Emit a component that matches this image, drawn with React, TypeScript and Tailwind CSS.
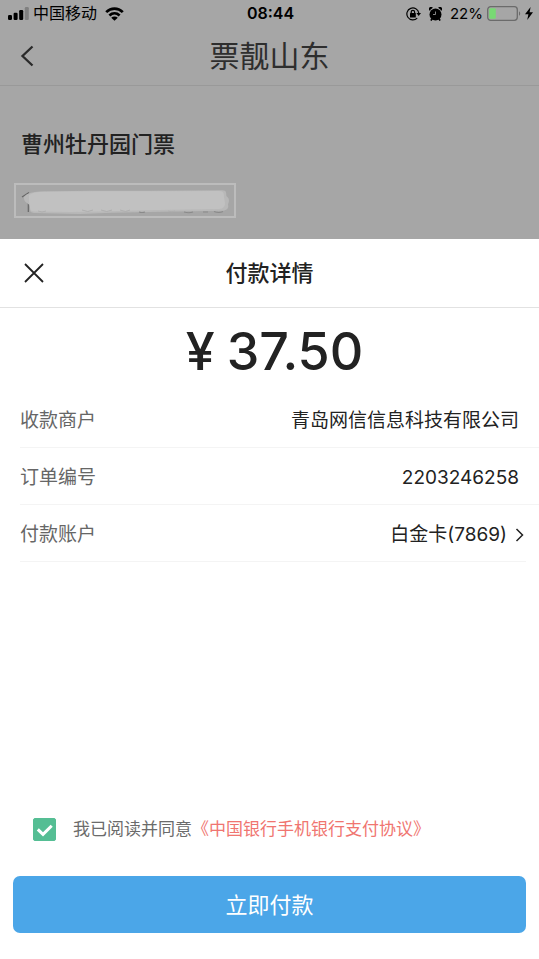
import { useState } from 'react';

const rows = [
  { label: '收款商户', value: '青岛网信信息科技有限公司' },
  { label: '订单编号', value: '2203246258' },
];

function StatusBar() {
  return (
    <div className="grid h-[27px] grid-cols-[1fr_auto_1fr] items-center pl-2 pr-1.5 text-base leading-[27px] text-black">
      <div className="flex items-center">
        <svg width="21" height="13" viewBox="0 0 21 13" aria-hidden="true">
          <rect x="0" y="8" width="4" height="5" rx="1.2" />
          <rect x="5.6" y="5.8" width="4" height="7.2" rx="1.2" />
          <rect x="11.2" y="3" width="4" height="10" rx="1.2" />
          <rect x="16.8" y="0" width="4" height="13" rx="1.2" fill="#808080" />
        </svg>
        <span className="ml-1">中国移动</span>
        <svg className="ml-2" width="19" height="14" viewBox="0 0 19 14" aria-hidden="true">
          <path d="M1.2 5.1C6 .4 13 .4 17.8 5.1" fill="none" stroke="#000" strokeWidth="2.7" />
          <path d="M4.4 8.5c3-2.8 7.2-2.8 10.2 0" fill="none" stroke="#000" strokeWidth="2.7" />
          <path d="M9.5 13.8 6.2 10.7c1.9-1.6 4.7-1.6 6.6 0z" />
        </svg>
      </div>
      <span className="font-semibold">08:44</span>
      <div className="flex items-center justify-end">
        {/* Rotation lock */}
        <svg width="15" height="14" viewBox="0 0 15 14" fill="none" stroke="#000" aria-hidden="true">
          <path d="M11.2 11.1A6 6 0 1 1 12.8 6" strokeWidth="1.2" />
          <path d="M10.4 6h4.6l-2.3 3z" fill="#000" stroke="none" />
          <rect x="4" y="6" width="5.8" height="4.4" rx=".5" fill="#000" stroke="none" />
          <path d="M5.2 6.4V5a1.7 1.7 0 0 1 3.4 0v1.4" strokeWidth="1.2" />
        </svg>
        {/* Alarm */}
        <svg className="ml-2" width="13" height="14" viewBox="0 0 13 14" aria-hidden="true">
          <circle cx="6.5" cy="7.5" r="6" />
          <path d="M.2 3.8A2.2 2.2 0 0 1 3.8.7zM12.800 3.800A2.200 2.200 0 0 0 9.200.7z" />
          <path d="m1.800 13.600 1.600-2M11.200 13.600l-1.600-2" stroke="#000" strokeWidth="1.600" />
          <path d="M6.500 4.500V7.500H4" fill="none" stroke="#a6a6a6" strokeWidth=".8" />
        </svg>
        <span className="ml-2 text-[15px]">22%</span>
        <svg className="ml-1" width="34" height="15" viewBox="0 0 34 15" fill="none" aria-hidden="true">
          <rect x=".7" y=".7" width="29.6" height="13.6" rx="3" stroke="#6b6b6b" strokeWidth="1.3" />
          <rect x="2.2" y="2.2" width="6.6" height="10.6" rx="1" fill="#78d974" />
          <path d="M32 5.2c1.6.7 1.6 3.9 0 4.6z" fill="#6b6b6b" />
        </svg>
        <svg className="ml-1" width="8" height="13" viewBox="0 0 8 13" aria-hidden="true">
          <path d="M5.6 0 0 7.3h3.4L2.2 13 8 5.3H4.6z" />
        </svg>
      </div>
    </div>
  );
}

function HiddenField() {
  return (
    <div className="ml-3.5 mt-[23px] h-[35px] w-[222px] border-2 border-[#bcbcbc]">
      <svg width="218" height="31" viewBox="0 0 218 31" fill="none" aria-hidden="true">
        <path d="M6 12 13 7.5M12.3 16v11" stroke="#686868" strokeWidth="1.2" />
        <path
          d="M8 12c3-4 8-5 16-5.5l50-.8h60l72-.4c5 0 4 3 4.5 6 3 2 3 5 1.5 8 1 4-1 6-5 6.5l-61 1-50 1-32 1.2-46-1c-6-1-3-4-4-7-1-3-6-3-6-8z"
          fill="#b8b8b8"
        />
        <path
          d="M13 10c4-2.5 8-3 14-3.2l50-.6h56l70-.3c5 0 5 3 5 6l1 6c0 5-3 6-8 6l-60 1-58 1.5-28 .6-36-.6c-7 0-4-5-6-9z"
          fill="#c1c1c1"
        />
        <path
          d="M22 26q4 2 8 0M66 25q6 3 11 0M85 25q6 3 11 0M104 25q6 3 10 0M152 26q4 1.5 7 0"
          stroke="#adadad"
          strokeWidth=".9"
        />
        <path d="M123 27q3 1 6 0M168 27q5 1.5 9 0M187 27h5M198 26.5q5 2 9 0" stroke="#8a8a8a" strokeWidth="1.2" />
      </svg>
    </div>
  );
}

function App() {
  const [agreed, setAgreed] = useState(true);

  return (
    <div className="flex min-h-screen flex-col bg-[#a6a6a6] font-[Inter,'Noto_Sans_CJK_SC',sans-serif] text-[#222]">
      <StatusBar />

      {/* Dimmed order page */}
      <header className="grid h-[59px] grid-cols-[1fr_auto_1fr] items-center border-b border-[#999] px-5">
        <button type="button" aria-label="返回" className="w-fit">
          <svg width="14" height="22" viewBox="0 0 14 22" fill="none" stroke="#2a2a2a" strokeWidth="2.3" aria-hidden="true">
            <path d="M12.5 1.5 2.5 11l10 9.5" />
          </svg>
        </button>
        <h1 className="text-[30px] leading-10 font-normal text-[#2e2e2e]">票靓山东</h1>
      </header>
      <section className="h-[153px] pt-[42px]">
        <h2 className="pl-[21px] text-[22px] leading-8 font-medium">曹州牡丹园门票</h2>
        <HiddenField />
      </section>

      {/* Payment sheet */}
      <main className="flex flex-1 flex-col bg-white">
        <div className="grid h-[69px] grid-cols-[1fr_auto_1fr] items-center border-b border-[#e2e2e2] px-6">
          <button type="button" aria-label="关闭" className="w-fit">
            <svg width="20" height="20" viewBox="0 0 20 20" fill="none" stroke="#222" strokeWidth="1.8" aria-hidden="true">
              <path d="m1 1 18 18M19 1 1 19" />
            </svg>
          </button>
          <h2 className="text-[22px] leading-8 font-medium">付款详情</h2>
        </div>

        <p className="flex h-[83px] items-center justify-center gap-3 pl-2.5 pt-1 text-[52px] leading-none font-medium">
          <span>¥</span>
          <span>37.50</span>
        </p>

        <div className="pl-5 text-[19px] leading-7">
          {rows.map((row) => (
            <div key={row.label} className="flex h-[57px] items-center justify-between border-b border-[#f4f4f4] pt-1 pr-5">
              <span className="text-[#666]">{row.label}</span>
              <span>{row.value}</span>
            </div>
          ))}
          <button type="button" className="flex h-[57px] w-full items-center pr-[13px]">
            <span className="flex h-full w-full items-center border-b border-[#f4f4f4] pt-1">
              <span className="text-[#666]">付款账户</span>
              <span className="ml-auto">白金卡(7869)</span>
              <svg className="ml-2 mr-0.5" width="9" height="14" viewBox="0 0 9 14" fill="none" stroke="#222" strokeWidth="1.5" aria-hidden="true">
                <path d="m1.5 1 6 6-6 6" />
              </svg>
            </span>
          </button>
        </div>

        <div className="mt-auto px-[13px] pb-[26px]">
          <div className="flex items-center pl-5 text-[17px] leading-6">
            <span className="relative mr-[17px] size-[23px]">
              <input
                id="agree"
                type="checkbox"
                checked={agreed}
                onChange={(e) => setAgreed(e.target.checked)}
                className="block size-[23px] appearance-none rounded-xs border border-[#55be94] checked:bg-[#55be94]"
              />
              {agreed && (
                <svg className="pointer-events-none absolute inset-0" width="23" height="23" viewBox="0 0 23 23" fill="none" stroke="#fff" strokeWidth="3" aria-hidden="true">
                  <path d="m4.8 11.3 5.2 5 8.7-8.6" />
                </svg>
              )}
            </span>
            <label htmlFor="agree" className="text-[#6b6b6b]">我已阅读并同意</label>
            <a href="#agreement" className="text-[#f07570]">《中国银行手机银行支付协议》</a>
          </div>
          <button type="button" className="mt-[35px] h-[57px] w-full rounded-[7px] bg-[#4ba6e8] text-[22px] leading-8 text-white">
            立即付款
          </button>
        </div>
      </main>
    </div>
  );
}

export default App;
